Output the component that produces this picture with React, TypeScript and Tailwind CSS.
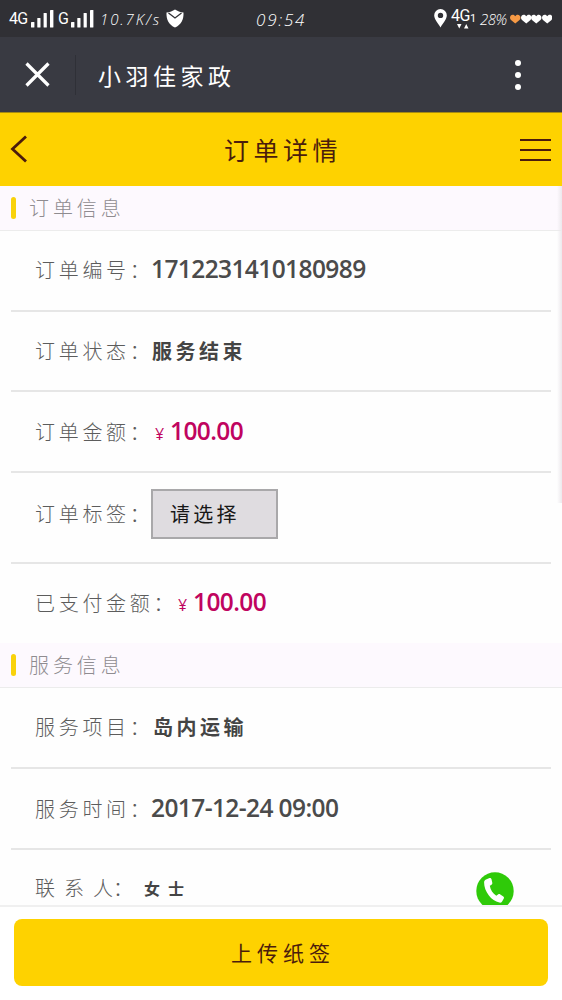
import type { ReactNode } from "react";

const Signal = () => (
  <svg width="23" height="20" viewBox="0 0 23 20" fill="#fff">
    <rect x="0" y="13" width="3.4" height="5.500" rx=".6" />
    <rect x="6.300" y="9" width="3.200" height="9.500" rx=".6" />
    <rect x="12.600" y="4" width="3.200" height="14.500" rx=".6" />
    <rect x="19" y="1" width="3.400" height="17.500" rx=".6" />
  </svg>
);

const Heart = ({ color }: { color: string }) => (
  <svg width="10.5" height="10" viewBox="0 0 10.500 10" fill={color}>
    <path d="M5.250 9.600 1 6C-1.100 3.800.4.700 2.700.7c1.200 0 2.100.6 2.550 1.600C5.700 1.300 6.600.7 7.800.7c2.300 0 3.800 3.100 1.700 5.300Z" />
  </svg>
);

function StatusBar() {
  return (
    <div className="flex h-[37px] items-center bg-[#303035] pl-[9px] pr-[10px] text-white">
      <div className="flex w-[247px] items-center">
        <span className="w-[22px] font-['Roboto'] text-[16px] tracking-[-0.8px]">4G</span>
        <Signal />
        <span className="ml-[4px] w-[13px] font-['Roboto'] text-[16px]">G</span>
        <Signal />
        <span className="ml-[6px] w-[64px] whitespace-nowrap pt-[2px] font-['Open_Sans'] text-[15px] font-light italic tracking-[1.9px]">10.7K/s</span>
        <svg className="ml-[2px] shrink-0" width="18" height="19" viewBox="0 0 18 19">
          <path d="M.5 3.500C4 3.400 6.500 2 9 .5c2.500 1.500 5 2.900 8.500 3 .4 7-2.500 12.500-8.500 15C3 16 .1 10.500.5 3.500Z" fill="#fff" />
          <path d="m2.500 4 6.500 5 6.500-5" fill="none" stroke="#303035" strokeWidth="1.300" />
        </svg>
      </div>
      <span className="w-[60px] whitespace-nowrap pt-px font-['Open_Sans'] text-[17px] font-light italic tracking-[1.800px]">09:54</span>
      <div className="ml-auto flex items-center">
        <svg width="13" height="19" viewBox="0 0 13 19">
          <path fill="#fff" fillRule="evenodd" d="M6.500 0a6.300 6.300 0 0 0-6.300 6.500C.2 10 4 14 6.500 18.500 9 14 12.800 10 12.800 6.500A6.300 6.300 0 0 0 6.500 0Zm0 3.700a2.700 2.700 0 1 1 0 5.400 2.700 2.700 0 0 1 0-5.400Z" />
        </svg>
        <div className="ml-[4px] flex w-[28px] flex-col">
          <span className="flex h-[16px] items-center font-['Roboto'] text-[16px] tracking-[-0.5px]">
            4G<span className="mt-[5px] text-[11px]">1</span>
          </span>
          <svg className="ml-[6px]" width="12" height="5" viewBox="0 0 12 5" fill="#fff">
            <path d="M0 0h4.500L2.250 4.500ZM7 4.500h4.500L9.250 0Z" />
          </svg>
        </div>
        <span className="ml-px w-[30px] whitespace-nowrap pt-px font-['Open_Sans'] text-[15px] font-light italic tracking-[-0.5px]">28%</span>
        <div className="flex">
          <Heart color="#f79a45" />
          <Heart color="#fff" />
          <Heart color="#fff" />
          <Heart color="#fff" />
        </div>
      </div>
    </div>
  );
}

function AppBar() {
  return (
    <div className="flex h-[75px] items-center bg-[#393a42] pl-[25px] pr-[41px] text-white">
      <svg width="25" height="25" viewBox="0 0 25 25" stroke="#fff" strokeWidth="3.200">
        <path d="m1.500 1.500 22 22m0-22-22 22" />
      </svg>
      <div className="ml-[25px] h-10 w-px bg-[#2f3037]" />
      <h1 className="ml-[22px] pt-px text-[23px] font-normal tracking-[4.500px]">小羽佳家政</h1>
      <div className="ml-auto flex flex-col gap-[6px]">
        <i className="size-[6px] rounded-full bg-white" />
        <i className="size-[6px] rounded-full bg-white" />
        <i className="size-[6px] rounded-full bg-white" />
      </div>
    </div>
  );
}

function TitleBar() {
  return (
    <div className="flex h-[74px] items-center justify-between border-t border-[#a68b12] bg-[#fed200] pl-[10px] pr-[11px] text-[#4b1c0c]">
      <svg className="-mt-px" width="31" height="28" viewBox="0 0 31 28" fill="none" stroke="currentColor" strokeWidth="2.800">
        <path d="M16 1.500 2.500 14 16 26.500" />
      </svg>
      <h2 className="pl-[5px] text-[25px] font-normal tracking-[4.500px]">订单详情</h2>
      <div className="flex flex-col gap-2">
        <i className="h-[2px] w-[31px] bg-current" />
        <i className="h-[2px] w-[31px] bg-current" />
        <i className="h-[2px] w-[31px] bg-current" />
      </div>
    </div>
  );
}

const Section = ({ title }: { title: string }) => (
  <div className="flex h-[45px] shrink-0 items-center border-b border-[#ececec] bg-[#fdf9fe] pl-[11px]">
    <i className="h-[22px] w-[5px] rounded-full bg-[#f9d20b]" />
    <span className="ml-[13px] pb-px text-[20px] font-light tracking-[3.900px] text-[#8f8c90]">{title}</span>
  </div>
);

const Label = ({ className, children }: { className: string; children: ReactNode }) => (
  <span className={`shrink-0 whitespace-nowrap text-[20px] font-light tracking-[3.700px] text-[#5c5c5c] ${className}`}>{children}</span>
);

const Price = () => (
  <span className="flex items-center text-[#c0045f]">
    <span className="w-[19px] pl-1 pt-1 font-['Open_Sans'] text-[16px] font-medium">¥</span>
    <span className="font-['Open_Sans'] text-[24.500px] font-semibold tracking-[-0.600px]">100.00</span>
  </span>
);

const rowLine = "mx-[11px] flex shrink-0 items-center border-b-2 border-[#e6e6e6] pl-[24px]";
const numberText = "font-['Open_Sans'] text-[24.500px] font-semibold tracking-[-0.600px] text-[#4b4b4b]";
const boldText = "text-[20px] font-bold tracking-[3.500px] text-[#444]";

export default function App() {
  return (
    <div className="flex h-[1000px] w-[562px] flex-col overflow-hidden bg-white font-['Noto_Sans_CJK_SC',sans-serif] leading-none">
      <StatusBar />
      <AppBar />
      <TitleBar />
      <main className="relative flex h-[719px] shrink-0 flex-col overflow-hidden bg-[#fefefe]">
        <Section title="订单信息" />
        <div className={`${rowLine} h-[81px] pb-[2px]`}>
          <Label className="w-[116px]">订单编号：</Label>
          <span className={numberText}>1712231410180989</span>
        </div>
        <div className={`${rowLine} h-[80px]`}>
          <Label className="w-[117px]">订单状态：</Label>
          <span className={boldText}>服务结束</span>
        </div>
        <div className={`${rowLine} h-[81px]`}>
          <Label className="w-[116px]">订单金额：</Label>
          <Price />
        </div>
        <div className={`${rowLine} h-[91px] pb-[8px]`}>
          <Label className="w-[116px]">订单标签：</Label>
          <button className="mt-px flex h-[50px] w-[127px] items-center border-2 border-[#a9a8aa] bg-[#dfdce0] pl-[17px] text-[20px] tracking-[3.300px] text-[#171717]">请选择</button>
        </div>
        <div className="mx-[11px] flex h-[79px] shrink-0 items-center pb-[2px] pl-[24px]">
          <Label className="w-[139px]">已支付金额：</Label>
          <Price />
        </div>
        <Section title="服务信息" />
        <div className={`${rowLine} h-[81px] pb-px`}>
          <Label className="w-[118px]">服务项目：</Label>
          <span className={boldText}>岛内运输</span>
        </div>
        <div className={`${rowLine} h-[81px]`}>
          <Label className="w-[116px]">服务时间：</Label>
          <span className={numberText}>2017-12-24 09:00</span>
        </div>
        <div className="mx-[11px] flex h-[80px] shrink-0 items-center pl-[24px]">
          <span className="w-[109px] whitespace-nowrap pb-[4px] text-[20px] font-light tracking-[9px] text-[#5c5c5c]">
            联系<span className="tracking-normal">人：</span>
          </span>
          <span className="pb-[4px] text-[16px] font-bold tracking-[8px] text-[#444]">女士</span>
          <svg className="ml-auto mr-[37px] mt-[2px]" width="38" height="38" viewBox="0 0 38 38">
            <circle cx="19" cy="19" r="18.700" fill="#2fca09" />
            <path d="M10 7.500 13.500 6c1.200-.3 1.700.3 2 1.300l.8 3.500c.2 1-.3 1.600-1.100 2.100l-1.400.8c.7 4 3 7.800 6.500 10l1.700-1.200c.8-.6 1.600-.6 2.300-.1l3 2.100c.8.6.9 1.300.4 2.200l-1.600 2.700c-.6 1-1.500 1.400-2.700 1.200C15.500 29.200 8 19.500 8.100 10.600c0-1.500.6-2.500 1.900-3.100Z" fill="#fff" />
          </svg>
        </div>
        <div className="absolute right-0 top-0 h-[317px] w-[5px] bg-gradient-to-r from-transparent to-[#ece9ed]" />
      </main>
      <footer className="h-[95px] shrink-0 border-t-2 border-[#f0f0f0] bg-white px-[14px] pt-3">
        <button className="flex h-[67px] w-full items-center justify-center rounded-lg bg-[#fed200] pl-1 text-[21px] font-normal tracking-[5px] text-[#4b1c0c]">上传纸签</button>
      </footer>
    </div>
  );
}
